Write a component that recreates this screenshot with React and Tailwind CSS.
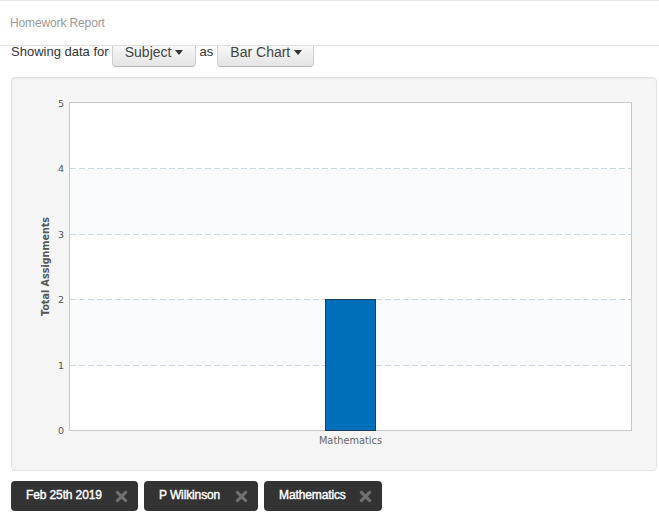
import React from "react";
import { FaTimes } from "react-icons/fa";

const sans = "font-['Liberation_Sans',Arial,sans-serif]";

function Dropdown({ label, width }) {
  return (
    <button className={`${width} h-[30px] -mt-[9px] shrink-0 flex items-center justify-center gap-[4px] rounded-b-[4px] border border-[#cfcfcf] border-b-[#b8b8b8] bg-gradient-to-b from-white to-[#e4e4e4] pl-[1px] text-[14px] text-[#444]`}>
      {label}
      <span className="w-0 h-0 border-x-[4.5px] border-x-transparent border-t-[5px] border-t-[#333]" />
    </button>
  );
}

function Tag({ label, width }) {
  return (
    <div className={`${width} h-[30px] flex items-center justify-between rounded-[4px] bg-[#333] pl-[15px] pr-[8px] text-[12px] tracking-[-0.12px] text-white`}>
      <span className="-mt-[2px] [-webkit-text-stroke:0.4px_white]">{label}</span>
      <FaTimes className="w-[17px] h-[17px] text-[#707070]" />
    </div>
  );
}

function Chart() {
  const ys = [103, 168.5, 234.5, 299.5, 365.5, 430];
  const tx = "'DejaVu Sans', sans-serif";
  return (
    <svg width="644" height="391" viewBox="12 78 644 391" className="block">
      <rect x="69.5" y="102.5" width="562" height="328" fill="#fff" />
      <rect x="70" y="168.5" width="561" height="66" fill="#fafbfe" />
      <rect x="70" y="299.5" width="561" height="66" fill="#fafbfe" />
      {[168.5, 234.5, 299.5, 365.5].map((y) => (
        <line key={y} x1="70" x2="631" y1={y} y2={y} stroke="#c5d9e4" strokeWidth="1" strokeDasharray="6 3" />
      ))}
      <rect x="69.5" y="102.5" width="562" height="328" fill="none" stroke="#c8c8c8" />
      <rect x="325.5" y="299.5" width="50" height="131" fill="#006fb9" stroke="#1c3d55" />
      {[5, 4, 3, 2, 1, 0].map((n, i) => (
        <text key={n} x="64" y={ys[i] + 3.5} textAnchor="end" fontSize="9.5" fill="#555" fontFamily={tx}>{n}</text>
      ))}
      <text x="350.5" y="444" textAnchor="middle" fontSize="9.8" fill="#666" fontFamily={tx}>Mathematics</text>
      <text transform="translate(48.5 266.5) rotate(-90)" textAnchor="middle" fontSize="9.6" fontWeight="bold" fill="#555" fontFamily={tx}>Total Assignments</text>
    </svg>
  );
}

export default function App() {
  return (
    <div className={`${sans} w-[659px] h-[513px] bg-white overflow-hidden`}>
      <header className="h-[46px] flex items-center border-t border-t-[#e7e7e7] border-b border-b-[#e0e0e0] pl-[10px] text-[12px] tracking-[-0.13px] text-[#999]">
        Homework Report
      </header>
      <div className="h-[21px] flex items-start pl-[11px] text-[13px] text-[#333] overflow-hidden">
        <span className="-mt-[4px] mr-[3px]">Showing data for</span>
        <Dropdown label="Subject" width="w-[84px]" />
        <span className="-mt-[4px] mx-[4px]">as</span>
        <Dropdown label="Bar Chart" width="w-[97px]" />
      </div>
      <section className="ml-[11px] mt-[10px] w-[646px] h-[394px] border border-[#e3e3e3] rounded-[4px] bg-[#f5f5f5] shadow-[inset_0_1px_1px_rgba(0,0,0,0.05)]">
        <Chart />
      </section>
      <div className="flex gap-[6px] pl-[11px] mt-[10px]">
        <Tag label="Feb 25th 2019" width="w-[127px]" />
        <Tag label="P Wilkinson" width="w-[114px]" />
        <Tag label="Mathematics" width="w-[118px]" />
      </div>
    </div>
  );
}
